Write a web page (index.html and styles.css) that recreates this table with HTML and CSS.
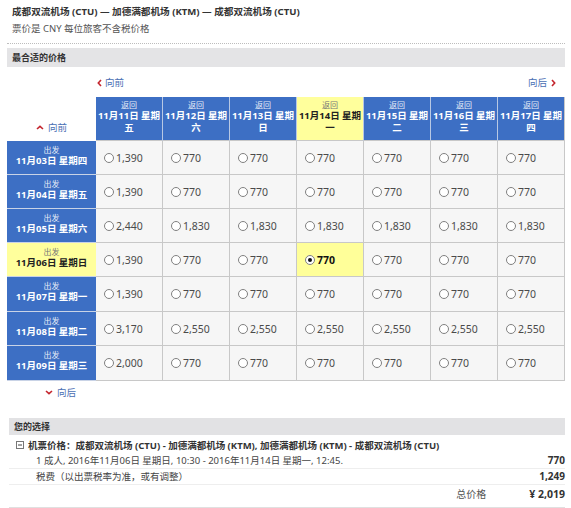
FILE: index.html
```html
<!DOCTYPE html>
<html lang="zh-CN">
<head>
<meta charset="utf-8">
<title>最合适的价格</title>
<link rel="stylesheet" href="styles.css">
</head>
<body>
<div class="page">
  <div class="route">成都双流机场 (CTU) — 加德满都机场 (KTM) — 成都双流机场 (CTU)</div>
  <div class="note">票价是 CNY 每位旅客不含税价格</div>
  <div class="dots"></div>
  <div class="bar">最合适的价格</div>
  <div class="nav">
    <span class="link"><svg class="chev" width="5" height="8" viewBox="0 0 5 8"><path d="M4 1 L1.3 4 L4 7" fill="none" stroke="#c4262e" stroke-width="1.6"/></svg>向前</span>
    <span class="link">向后<svg class="chev after" width="5" height="8" viewBox="0 0 5 8"><path d="M1 1 L3.7 4 L1 7" fill="none" stroke="#c4262e" stroke-width="1.6"/></svg></span>
  </div>

  <div class="grid">
    <div class="corner"><span class="link"><svg class="chev" width="8" height="5" viewBox="0 0 8 5"><path d="M1 4 L4 1.3 L7 4" fill="none" stroke="#c4262e" stroke-width="1.6"/></svg>向前</span></div>
    <div class="ch"><span class="sm">返回</span><b>11月11日 星期<br>五</b></div>
    <div class="ch"><span class="sm">返回</span><b>11月12日 星期<br>六</b></div>
    <div class="ch"><span class="sm">返回</span><b>11月13日 星期<br>日</b></div>
    <div class="ch hl"><span class="sm">返回</span><b>11月14日 星期<br>一</b></div>
    <div class="ch"><span class="sm">返回</span><b>11月15日 星期<br>二</b></div>
    <div class="ch"><span class="sm">返回</span><b>11月16日 星期<br>三</b></div>
    <div class="ch"><span class="sm">返回</span><b>11月17日 星期<br>四</b></div>

    <div class="rh"><span class="sm">出发</span><b>11月03日 星期四</b></div>
    <div class="c"><i class="radio"></i>1,390</div>
    <div class="c"><i class="radio"></i>770</div>
    <div class="c"><i class="radio"></i>770</div>
    <div class="c"><i class="radio"></i>770</div>
    <div class="c"><i class="radio"></i>770</div>
    <div class="c"><i class="radio"></i>770</div>
    <div class="c"><i class="radio"></i>770</div>

    <div class="rh"><span class="sm">出发</span><b>11月04日 星期五</b></div>
    <div class="c"><i class="radio"></i>1,390</div>
    <div class="c"><i class="radio"></i>770</div>
    <div class="c"><i class="radio"></i>770</div>
    <div class="c"><i class="radio"></i>770</div>
    <div class="c"><i class="radio"></i>770</div>
    <div class="c"><i class="radio"></i>770</div>
    <div class="c"><i class="radio"></i>770</div>

    <div class="rh"><span class="sm">出发</span><b>11月05日 星期六</b></div>
    <div class="c"><i class="radio"></i>2,440</div>
    <div class="c"><i class="radio"></i>1,830</div>
    <div class="c"><i class="radio"></i>1,830</div>
    <div class="c"><i class="radio"></i>1,830</div>
    <div class="c"><i class="radio"></i>1,830</div>
    <div class="c"><i class="radio"></i>1,830</div>
    <div class="c"><i class="radio"></i>1,830</div>

    <div class="rh hl"><span class="sm">出发</span><b>11月06日 星期日</b></div>
    <div class="c"><i class="radio"></i>1,390</div>
    <div class="c"><i class="radio"></i>770</div>
    <div class="c"><i class="radio"></i>770</div>
    <div class="c sel"><i class="radio on"></i>770</div>
    <div class="c"><i class="radio"></i>770</div>
    <div class="c"><i class="radio"></i>770</div>
    <div class="c"><i class="radio"></i>770</div>

    <div class="rh"><span class="sm">出发</span><b>11月07日 星期一</b></div>
    <div class="c"><i class="radio"></i>1,390</div>
    <div class="c"><i class="radio"></i>770</div>
    <div class="c"><i class="radio"></i>770</div>
    <div class="c"><i class="radio"></i>770</div>
    <div class="c"><i class="radio"></i>770</div>
    <div class="c"><i class="radio"></i>770</div>
    <div class="c"><i class="radio"></i>770</div>

    <div class="rh"><span class="sm">出发</span><b>11月08日 星期二</b></div>
    <div class="c"><i class="radio"></i>3,170</div>
    <div class="c"><i class="radio"></i>2,550</div>
    <div class="c"><i class="radio"></i>2,550</div>
    <div class="c"><i class="radio"></i>2,550</div>
    <div class="c"><i class="radio"></i>2,550</div>
    <div class="c"><i class="radio"></i>2,550</div>
    <div class="c"><i class="radio"></i>2,550</div>

    <div class="rh"><span class="sm">出发</span><b>11月09日 星期三</b></div>
    <div class="c"><i class="radio"></i>2,000</div>
    <div class="c"><i class="radio"></i>770</div>
    <div class="c"><i class="radio"></i>770</div>
    <div class="c"><i class="radio"></i>770</div>
    <div class="c"><i class="radio"></i>770</div>
    <div class="c"><i class="radio"></i>770</div>
    <div class="c"><i class="radio"></i>770</div>
  </div>

  <div class="down"><span class="link"><svg class="chev" width="8" height="5" viewBox="0 0 8 5"><path d="M1 1 L4 3.7 L7 1" fill="none" stroke="#c4262e" stroke-width="1.6"/></svg>向后</span></div>

  <div class="choice">
    <div class="choice-bar">您的选择</div>
    <div class="choice-body">
      <div class="line head"><svg class="box" width="8" height="8" viewBox="0 0 8 8"><rect x="0.5" y="0.5" width="7" height="7" fill="#fff" stroke="#777"/><path d="M2 4 H6" stroke="#444"/></svg>机票价格：成都双流机场 (CTU) - 加德满都机场 (KTM), 加德满都机场 (KTM) - 成都双流机场 (CTU)</div>
      <div class="line item"><span>1 成人, 2016年11月06日 星期日, 10:30 - 2016年11月14日 星期一, 12:45.</span><b>770</b></div>
      <div class="line item tax"><span>税费（以出票税率为准，或有调整）</span><b>1,249</b></div>
      <div class="line total"><span class="tl">总价格</span><b>¥ 2,019</b></div>
    </div>
  </div>
</div>
</body>
</html>
```

FILE: styles.css
```css
* { box-sizing: border-box; }
body {
  margin: 0;
  background: #fff;
  font-family: "Noto Sans", "Noto Sans CJK SC", sans-serif;
  color: #333;
  font-size: 9.5px;
}
.page {
  padding: 5px 6px 0 7px;
  width: 571px;
}
.route {
  padding-left: 5px;
  font-weight: bold;
  font-size: 9.6px;
  line-height: 14px;
  color: #333;
}
.note {
  margin-top: 3px;
  padding-left: 5px;
  line-height: 14px;
  font-size: 9.5px;
  color: #555;
}
.dots {
  margin-top: 7px;
  border-top: 1px dotted #bdbdbd;
}
.bar {
  margin-top: 4px;
  height: 19px;
  line-height: 19px;
  background: #e4e4e6;
  padding-left: 5px;
  font-weight: bold;
  font-size: 9px;
  color: #333;
}
.nav {
  margin-top: 9px;
  display: flex;
  justify-content: space-between;
  padding: 0 9px 0 90px;
  line-height: 14px;
}
.link {
  display: inline-flex;
  align-items: center;
  color: #4a6eb3;
  font-size: 9.5px;
}
.chev { margin-right: 3px; }
.chev.after { margin: 0 0 0 4px; }

.grid {
  margin-top: 7px;
  display: grid;
  grid-template-columns: 89px repeat(7, 67px);
  grid-template-rows: 44px 34px 34px 34px 34px 35px 34px 35px;
  width: 558px;
}
.corner {
  display: flex;
  align-items: flex-end;
  justify-content: center;
  padding-bottom: 7px;
}
.corner .chev { margin-right: 4px; }
.ch {
  background: #3d6fc4;
  color: #fff;
  border-right: 1px solid #b8c8e4;
  border-bottom: 1px solid #c8c8c8;
  text-align: center;
  padding-top: 3px;
  display: flex;
  flex-direction: column;
  align-items: center;
}
.ch:nth-child(8) { border-right: 1px solid #c8c8c8; }
.sm {
  display: block;
  font-size: 8px;
  line-height: 10px;
  color: #e6edf8;
}
.ch b {
  display: block;
  font-size: 9.5px;
  line-height: 12px;
  font-weight: bold;
}
.rh {
  background: #3d6fc4;
  color: #fff;
  border-bottom: 1px solid #c9d3e6;
  text-align: center;
  padding-top: 4px;
}
.rh b {
  display: block;
  font-size: 9.5px;
  line-height: 12px;
}
.hl {
  background: #ffff9c;
  color: #222;
}
.hl .sm { color: #777; }
.c {
  background: #f6f6f6;
  border-right: 1px solid #c8c8c8;
  border-bottom: 1px solid #c8c8c8;
  display: flex;
  align-items: center;
  padding-left: 8px;
  font-size: 10.5px;
  color: #4a4a4a;
}
.c.sel {
  background: #ffff99;
  font-weight: bold;
  color: #111;
}
.radio {
  width: 10px;
  height: 10px;
  border: 1px solid #808080;
  border-radius: 50%;
  background: #fff;
  margin-right: 2px;
  position: relative;
}
.radio.on::after {
  content: "";
  position: absolute;
  left: 2px;
  top: 2px;
  width: 4px;
  height: 4px;
  border-radius: 50%;
  background: #111;
}
.down {
  margin-top: 4px;
  line-height: 14px;
  padding-left: 38px;
}
.down .chev { margin-right: 4px; }

.choice {
  margin-top: 18px;
  margin-left: 2px;
}
.choice-bar {
  height: 17px;
  line-height: 17px;
  background: #e2e2e4;
  padding-left: 5px;
  font-weight: bold;
  font-size: 9px;
  color: #333;
}
.choice-body {
  padding-top: 3px;
  border-bottom: 2px solid #e0e0e0;
  padding-bottom: 4px;
}
.line {
  line-height: 15px;
  font-size: 9.5px;
  color: #444;
}
.head {
  display: flex;
  align-items: center;
  padding-left: 7px;
  font-weight: bold;
  color: #333;
}
.box { margin-right: 4px; }
.item {
  display: flex;
  justify-content: space-between;
  padding-left: 27px;
}
.tax { border-top: 1px solid #eeeeee; border-bottom: 1px solid #eeeeee; }
.item b { font-weight: bold; color: #333; font-size: 10px; }
.total {
  display: flex;
  justify-content: flex-end;
  line-height: 18px;
}
.total b { font-weight: bold; color: #333; font-size: 10.5px; }
.tl { margin-right: 43px; color: #555; font-size: 10px; }
```
